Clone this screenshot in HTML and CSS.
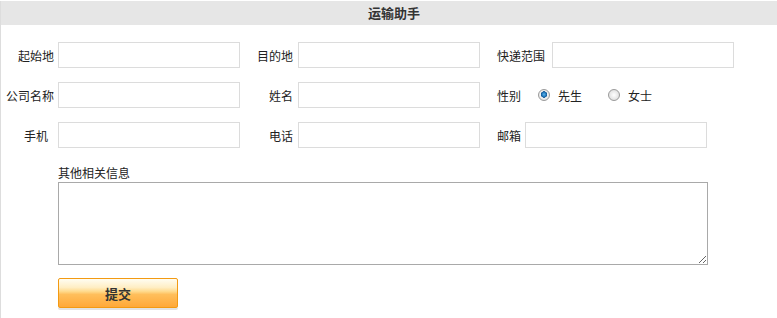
FILE: index.html
```html
<!doctype html>
<html>
<head>
    <meta charset="utf-8">
    <title>运输助手</title>
    <link rel="stylesheet" href="styles.css">
</head>
<body>
<div class="panel">
    <div class="panel-title">运输助手</div>

    <form class="form">
        <div class="row">
            <label class="label">起始地</label>
            <input class="field" type="text">
            <label class="label label-mid">目的地</label>
            <input class="field" type="text">
            <div class="extra">
                <span>快递范围</span>
                <input class="field gap-wide" type="text">
            </div>
        </div>

        <div class="row">
            <label class="label">公司名称</label>
            <input class="field" type="text">
            <label class="label label-mid">姓名</label>
            <input class="field" type="text">
            <div class="extra">
                <span>性别</span>
                <label class="choice choice-first"><input type="radio" name="sex" checked><span>先生</span></label>
                <label class="choice"><input type="radio" name="sex"><span>女士</span></label>
            </div>
        </div>

        <div class="row">
            <label class="label label-short">手机</label>
            <input class="field" type="text">
            <label class="label label-mid">电话</label>
            <input class="field" type="text">
            <div class="extra">
                <span>邮箱</span>
                <input class="field gap-narrow" type="text">
            </div>
        </div>

        <div class="notes">
            <div class="notes-title">其他相关信息</div>
            <textarea class="notes-box"></textarea>
        </div>

        <button class="submit" type="button">提交</button>
    </form>
</div>
</body>
</html>
```

FILE: styles.css
```css
body {
    margin: 0;
    font-family: "Noto Sans CJK SC", "Liberation Sans", sans-serif;
    font-size: 12px;
    color: #222;
    background: #fff;
}

.panel {
    border-left: 1px solid #dddddd;
    min-height: 318px;
    box-sizing: border-box;
}

/* Titelleiste */
.panel-title {
    margin-top: 1px;
    height: 24px;
    line-height: 24px;
    padding-left: 10px;
    background: #e6e6e6;
    text-align: center;
    font-size: 13px;
    font-weight: bold;
    color: #333;
}

.form {
    padding-top: 17px;
}

.row {
    display: flex;
    align-items: center;
    height: 26px;
    margin-bottom: 14px;
}

.label {
    width: 57px;
    box-sizing: border-box;
    padding-right: 4px;
    text-align: right;
    white-space: nowrap;
}

.label-short {
    padding-right: 10px;
}

.label-mid {
    width: 58px;
    padding-right: 5px;
}

.field {
    width: 182px;
    height: 26px;
    box-sizing: border-box;
    border: 1px solid #dcdcdc;
    padding: 0 4px;
    margin: 0;
    font: inherit;
}

.extra {
    display: flex;
    align-items: center;
    margin-left: 17px;
    white-space: nowrap;
}

.gap-wide {
    margin-left: 7px;
}

.gap-narrow {
    margin-left: 4px;
}

/* Radiobuttons */
.choice {
    display: flex;
    align-items: center;
    gap: 8px;
    margin-left: 26px;
}

.choice-first {
    margin-left: 17px;
}

.choice input {
    appearance: none;
    width: 12px;
    height: 12px;
    margin: 0;
    border: 1px solid #9a9a9a;
    border-radius: 50%;
    box-sizing: border-box;
    background: radial-gradient(circle at 50% 50%, #ffffff 0%, #e2e2e2 70%, #cfcfcf 100%);
}

.choice input:checked {
    background: radial-gradient(circle at 50% 45%, #5cb6ee 0%, #1c6fb3 32%, #0d4f8a 40%, #f2f2f2 46%, #d8d8d8 100%);
}

.notes {
    margin-left: 57px;
    margin-top: 17px;
}

.notes-title {
    line-height: 16px;
}

.notes-box {
    display: block;
    width: 650px;
    height: 83px;
    box-sizing: border-box;
    margin: 1px 0 0;
    border: 1px solid #a9a9a9;
    font: inherit;
}

.submit {
    display: block;
    margin: 13px 0 0 57px;
    width: 120px;
    height: 30px;
    border: 1px solid #f39a12;
    border-radius: 2px;
    background: linear-gradient(#fffdf2 0%, #ffeec4 30%, #ffd98a 45%, #ffbf5c 55%, #ffa838 100%);
    box-shadow: 0 2px 0 #e2e2e2;
    font-family: inherit;
    font-size: 13px;
    font-weight: bold;
    color: #333;
    cursor: pointer;
}
```
